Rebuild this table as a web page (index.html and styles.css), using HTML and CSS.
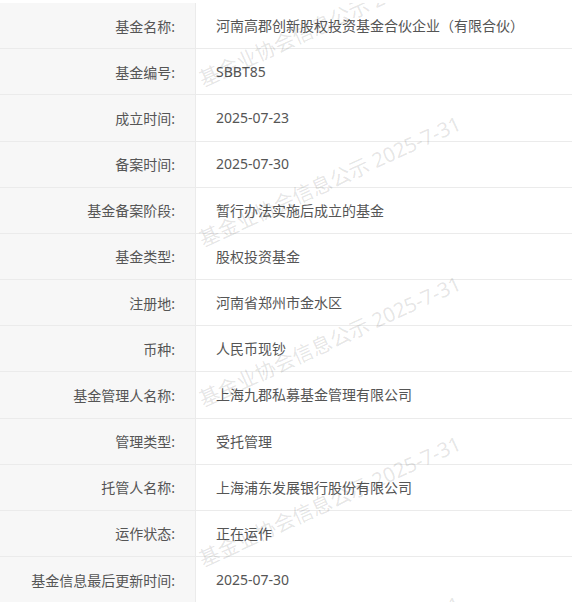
FILE: index.html
```html
<!DOCTYPE html>
<html lang="zh-CN">
  <head>
    <meta charset="UTF-8" />
    <meta name="viewport" content="width=device-width, initial-scale=1.0" />
    <title>基金信息</title>
    <link rel="stylesheet" href="styles.css">
  </head>
  <body>
    <div class="info">
      <div class="row"><div class="label">基金名称:</div><div class="value">河南高郡创新股权投资基金合伙企业（有限合伙）</div></div>
      <div class="row"><div class="label">基金编号:</div><div class="value">SBBT85</div></div>
      <div class="row"><div class="label">成立时间:</div><div class="value">2025-07-23</div></div>
      <div class="row"><div class="label">备案时间:</div><div class="value">2025-07-30</div></div>
      <div class="row"><div class="label">基金备案阶段:</div><div class="value">暂行办法实施后成立的基金</div></div>
      <div class="row"><div class="label">基金类型:</div><div class="value">股权投资基金</div></div>
      <div class="row"><div class="label">注册地:</div><div class="value">河南省郑州市金水区</div></div>
      <div class="row"><div class="label">币种:</div><div class="value">人民币现钞</div></div>
      <div class="row"><div class="label">基金管理人名称:</div><div class="value">上海九郡私募基金管理有限公司</div></div>
      <div class="row"><div class="label">管理类型:</div><div class="value">受托管理</div></div>
      <div class="row"><div class="label">托管人名称:</div><div class="value">上海浦东发展银行股份有限公司</div></div>
      <div class="row"><div class="label">运作状态:</div><div class="value">正在运作</div></div>
      <div class="row"><div class="label">基金信息最后更新时间:</div><div class="value">2025-07-30</div></div>

      <!-- 水印 -->
      <div class="watermarks">
        <span class="mark" style="top: 64px">基金业协会信息公示 2025-7-31</span>
        <span class="mark" style="top: 224px">基金业协会信息公示 2025-7-31</span>
        <span class="mark" style="top: 384px">基金业协会信息公示 2025-7-31</span>
        <span class="mark" style="top: 544px">基金业协会信息公示 2025-7-31</span>
        <span class="mark" style="top: 704px">基金业协会信息公示 2025-7-31</span>
      </div>
    </div>
  </body>
</html>
```

FILE: styles.css
```css
* {
  margin: 0;
  padding: 0;
  box-sizing: border-box;
}

body {
  font-family: "Noto Sans", "Noto Sans CJK SC", sans-serif;
  font-size: 14px;
  color: #555;
  background: white;
  padding-top: 3px;
  overflow: hidden;
}

.info {
  position: relative;
  width: 100%;
}

.row {
  display: flex;
  height: 46.18px;
  border-bottom: 1px solid #ebebeb;
}

.label {
  width: 196px;
  flex-shrink: 0;
  background: #f7f7f7;
  border-right: 1px solid #ebebeb;
  padding-right: 20px;
  display: flex;
  align-items: center;
  justify-content: flex-end;
}

.value {
  flex: 1;
  padding-left: 20px;
  display: flex;
  align-items: center;
  padding-bottom: 1px;
}

.watermarks {
  position: absolute;
  top: 0;
  left: 0;
  right: 0;
  bottom: 0;
  overflow: hidden;
  pointer-events: none;
}

.mark {
  position: absolute;
  left: 200px;
  font-size: 20.5px;
  line-height: 26px;
  white-space: nowrap;
  color: rgba(0, 0, 0, 0.11);
  transform: rotate(-24.5deg);
  transform-origin: left center;
}
```
